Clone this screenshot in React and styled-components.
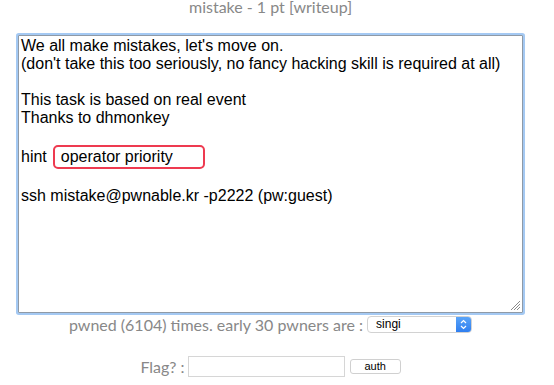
import React from 'react';
import styled, { createGlobalStyle } from 'styled-components';

const GlobalStyle = createGlobalStyle`
  html, body {
    margin: 0;
    padding: 0;
    background: #fff;
  }
`;

const Page = styled.div`
  width: 541px;
  display: flex;
  flex-direction: column;
  align-items: center;
  font-family: Lato, "Open Sans", sans-serif;
  color: #888;
`;

const Title = styled.div`
  font-size: 16px;
  line-height: 20px;
  margin-top: -3px;
  height: 20px;
`;

const Editor = styled.div`
  position: relative;
  box-sizing: border-box;
  width: 505px;
  height: 278px;
  margin-top: 18px;
  padding: 1px 2px;
  border: 1px solid #8f9aa6;
  box-shadow: 0 0 0 2px #a4c9f3;
  border-radius: 1px;
  background: #fff;
  font-family: "Liberation Sans", Arial, sans-serif;
  font-size: 16px;
  line-height: 18px;
  color: #000;
  text-align: left;
`;

const Line = styled.div`
  height: ${(p) => (p.tall ? '24px' : '18px')};
  display: flex;
  align-items: center;
  white-space: pre;
`;

const HintBox = styled.span`
  box-sizing: border-box;
  display: inline-block;
  width: 152px;
  height: 24px;
  margin-left: 6px;
  padding: 1px 6px;
  border: 2px solid #ee3a50;
  border-radius: 5px;
  line-height: 18px;
`;

const Grip = styled.svg`
  position: absolute;
  right: 1px;
  bottom: 1px;
`;

const InfoRow = styled.div`
  display: flex;
  align-items: center;
  height: 18px;
  margin-top: 2px;
  font-size: 16px;
`;

const Select = styled.div`
  box-sizing: border-box;
  display: flex;
  align-items: center;
  width: 105px;
  height: 17px;
  margin-left: 4px;
  border: 1px solid #d2d2d2;
  border-radius: 4px;
  background: #fff;
  overflow: hidden;
  font-family: "Liberation Sans", Arial, sans-serif;
  font-size: 12px;
  color: #000;
`;

const SelectText = styled.span`
  flex: 1;
  padding-left: 8px;
`;

const SelectArrow = styled.span`
  width: 15px;
  height: 100%;
  display: flex;
  align-items: center;
  justify-content: center;
  background: linear-gradient(#5aa4f8, #2f7ff0);
`;

const FlagRow = styled.div`
  display: flex;
  align-items: center;
  margin-top: 23px;
  font-size: 16px;
`;

const FlagInput = styled.div`
  box-sizing: border-box;
  width: 157px;
  height: 21px;
  margin-left: 3px;
  border: 1px solid #d6d6d6;
  background: #fff;
`;

const AuthButton = styled.div`
  box-sizing: border-box;
  width: 51px;
  height: 15px;
  margin-left: 5px;
  border: 1px solid #d0d0d0;
  border-radius: 3px;
  background: #fff;
  font-family: "Liberation Sans", Arial, sans-serif;
  font-size: 11px;
  line-height: 13px;
  color: #000;
  text-align: center;
`;

export default function App() {
  return (
    <>
      <GlobalStyle />
      <Page>
        <Title>mistake - 1 pt [writeup]</Title>
        <Editor>
          <Line>We all make mistakes, let's move on.</Line>
          <Line>(don't take this too seriously, no fancy hacking skill is required at all)</Line>
          <Line />
          <Line>This task is based on real event</Line>
          <Line>Thanks to dhmonkey</Line>
          <Line />
          <Line tall>
            hint<HintBox>operator priority</HintBox>
          </Line>
          <Line />
          <Line>ssh mistake@pwnable.kr -p2222 (pw:guest)</Line>
          <Grip width="12" height="12" viewBox="0 0 12 12">
            <g stroke="#8a8a8a" strokeWidth="1">
              <line x1="2" y1="11" x2="11" y2="2" />
              <line x1="5" y1="11" x2="11" y2="5" />
              <line x1="8" y1="11" x2="11" y2="8" />
            </g>
          </Grip>
        </Editor>
        <InfoRow>
          pwned (6104) times. early 30 pwners are :
          <Select>
            <SelectText>singi</SelectText>
            <SelectArrow>
              <svg width="7" height="11" viewBox="0 0 7 11">
                <path d="M1 4 L3.5 1.5 L6 4 M1 7 L3.5 9.5 L6 7" fill="none" stroke="#fff" strokeWidth="1.2" />
              </svg>
            </SelectArrow>
          </Select>
        </InfoRow>
        <FlagRow>
          Flag? :
          <FlagInput />
          <AuthButton>auth</AuthButton>
        </FlagRow>
      </Page>
    </>
  );
}
